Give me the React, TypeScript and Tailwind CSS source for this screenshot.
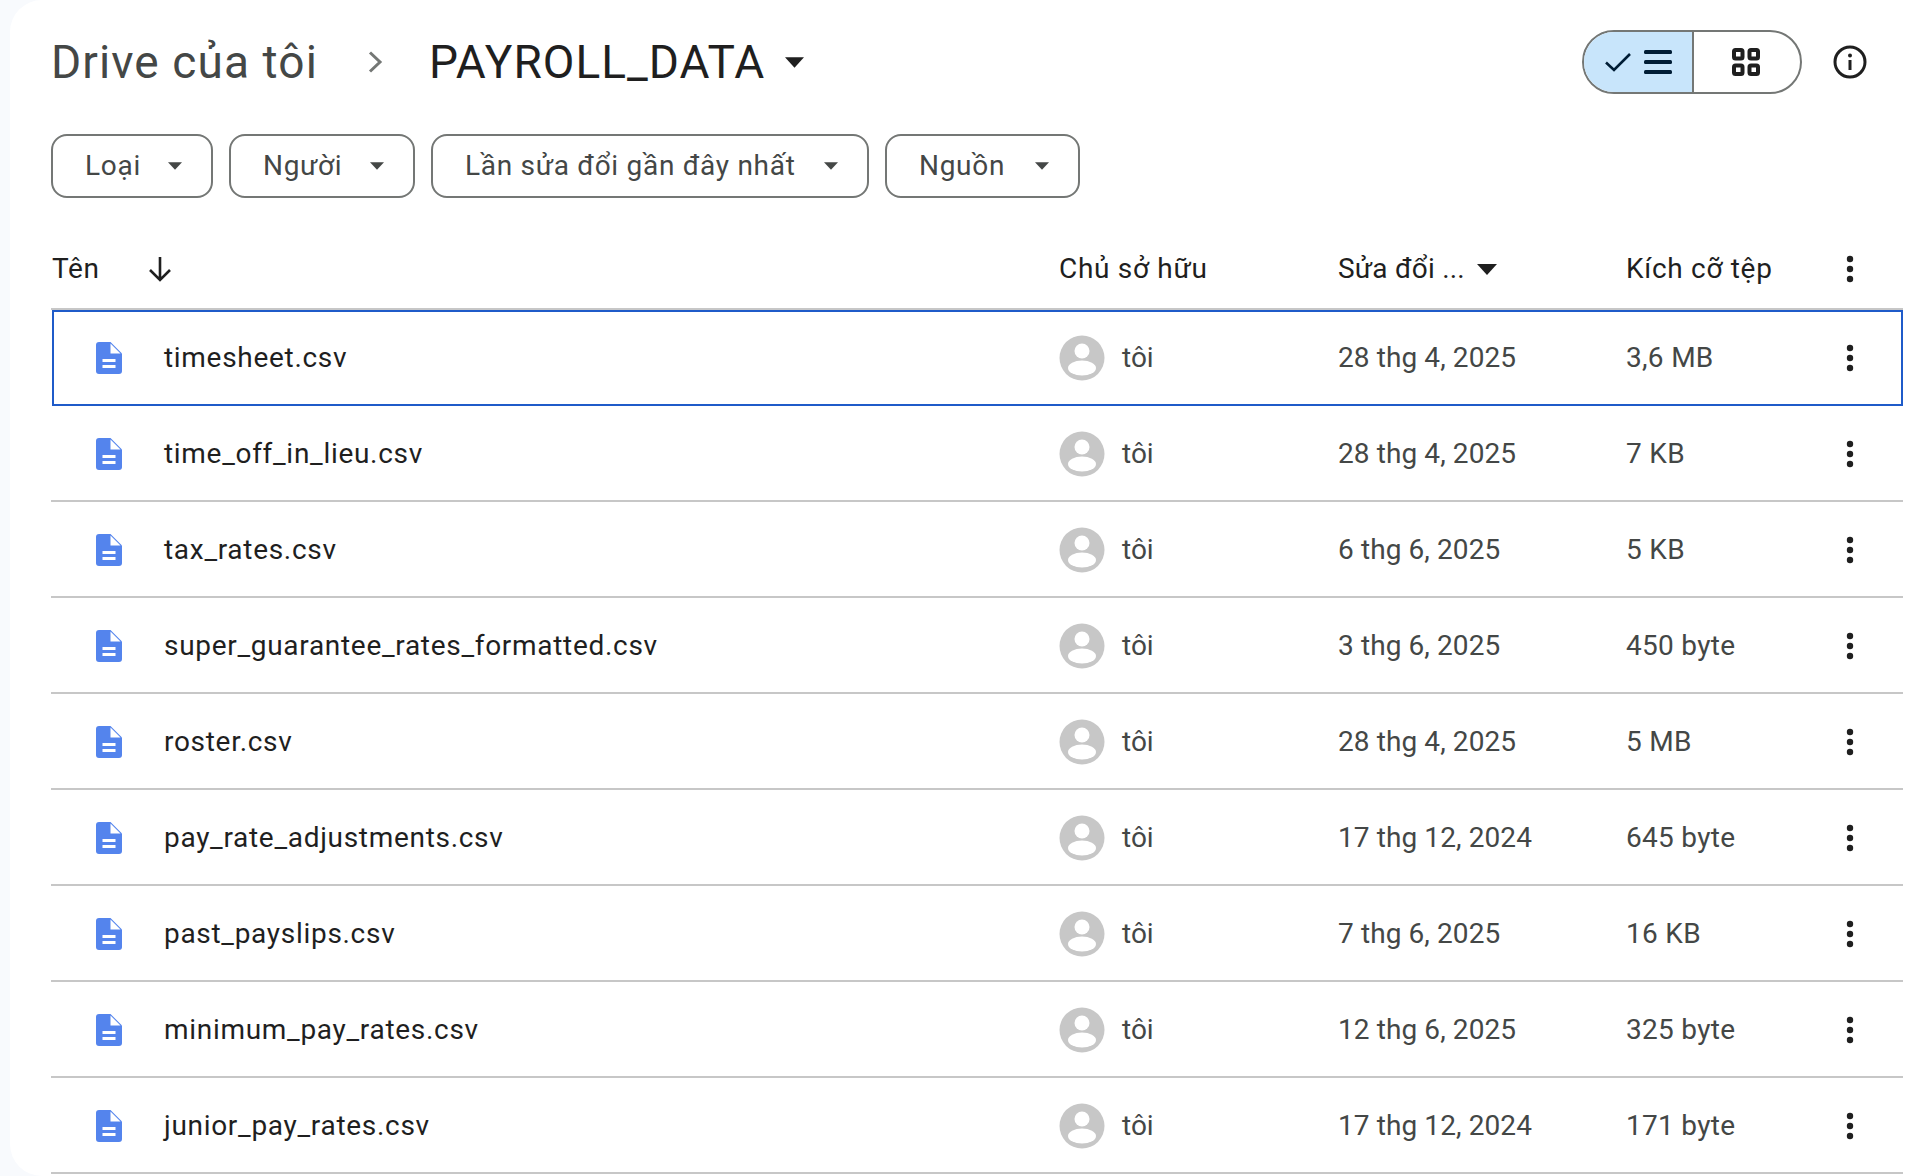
const files = [
  { name: 'timesheet.csv', date: '28 thg 4, 2025', size: '3,6 MB' },
  { name: 'time_off_in_lieu.csv', date: '28 thg 4, 2025', size: '7 KB' },
  { name: 'tax_rates.csv', date: '6 thg 6, 2025', size: '5 KB' },
  { name: 'super_guarantee_rates_formatted.csv', date: '3 thg 6, 2025', size: '450 byte' },
  { name: 'roster.csv', date: '28 thg 4, 2025', size: '5 MB' },
  { name: 'pay_rate_adjustments.csv', date: '17 thg 12, 2024', size: '645 byte' },
  { name: 'past_payslips.csv', date: '7 thg 6, 2025', size: '16 KB' },
  { name: 'minimum_pay_rates.csv', date: '12 thg 6, 2025', size: '325 byte' },
  { name: 'junior_pay_rates.csv', date: '17 thg 12, 2024', size: '171 byte' },
]

const filters = [
  { label: 'Loại', width: 'w-[162px]' },
  { label: 'Người', width: 'w-[186px]' },
  { label: 'Lần sửa đổi gần đây nhất', width: 'w-[438px]' },
  { label: 'Nguồn', width: 'w-[195px]' },
]

function Caret({ className }: { className: string }) {
  return (
    <svg viewBox="0 0 20 11" className={className} fill="currentColor">
      <path d="M0 0h20L10 11z" />
    </svg>
  )
}

function Dots() {
  return (
    <svg width="24" height="32" viewBox="0 0 24 32" className="text-[#1f1f1f]" fill="currentColor">
      <circle cx="12" cy="6" r="3.2" />
      <circle cx="12" cy="16" r="3.2" />
      <circle cx="12" cy="26" r="3.2" />
    </svg>
  )
}

function DocIcon() {
  return (
    <svg width="26" height="32" viewBox="0 0 26 32" className="shrink-0">
      <path
        d="M3 0h11.5L26 11.5V29a3 3 0 0 1-3 3H3a3 3 0 0 1-3-3V3a3 3 0 0 1 3-3z"
        fill="#5484ed"
      />
      <path d="M14.5 1.5 24.5 11.5H14.5z" fill="#fff" />
      <rect x="6.5" y="17" width="13" height="3" fill="#fff" />
      <rect x="6.5" y="23" width="13" height="3" fill="#fff" />
    </svg>
  )
}

function Avatar() {
  return (
    <svg width="46" height="46" viewBox="0 0 46 46" className="shrink-0">
      <circle cx="23" cy="23" r="22.5" fill="#c7c7c7" />
      <circle cx="23" cy="16" r="7.5" fill="#fff" />
      <ellipse cx="23" cy="33" rx="14" ry="7.5" fill="#fff" />
    </svg>
  )
}

function FileRow({ file, selected }: { file: (typeof files)[number]; selected: boolean }) {
  return (
    <div
      className={`grid h-[96px] items-center ${
        selected
          ? 'ml-[1px] grid-cols-[1005px_279px_288px_1fr] border-2 border-[#1f5bc9]'
          : 'grid-cols-[1008px_279px_288px_1fr] border-b-2 border-[#c7c7c7] pt-[2px]'
      }`}
    >
      <div className={`flex items-center text-[28px] tracking-[0.7px] text-[#1f1f1f] ${selected ? 'pl-[42px]' : 'pl-[45px]'}`}>
        <DocIcon />
        <span className="ml-[42px]">{file.name}</span>
      </div>
      <div className="flex items-center text-[28px] text-[#444746]">
        <Avatar />
        <span className="ml-[17px]">tôi</span>
      </div>
      <div className="text-[28px] tracking-[0.1px] text-[#444746]">{file.date}</div>
      <div className={`flex items-center justify-between text-[28px] tracking-[0.3px] text-[#444746] ${selected ? 'pr-[39px]' : 'pr-[41px]'}`}>
        <span>{file.size}</span>
        <Dots />
      </div>
    </div>
  )
}

export default function App() {
  return (
    <div className="flex h-[1176px] w-[1916px] overflow-hidden bg-[#f8fafd] font-['Roboto',sans-serif]">
      <div className="ml-[10px] flex h-full flex-1 flex-col rounded-l-[32px] bg-white pr-[13px] pl-[41px]">
        {/* Breadcrumb and view toggle */}
        <div className="flex h-[134px] shrink-0 items-start pt-[30px]">
          <div className="flex h-[64px] items-center">
            <span className="text-[46px] tracking-[1.1px] text-[#444746]">Drive của tôi</span>
            <svg width="15" height="22" viewBox="0 0 15 22" className="mr-[46px] ml-[50px] text-[#747775]" fill="none" stroke="currentColor" strokeWidth="3">
              <path d="M2 1.5 12 11 2 20.5" />
            </svg>
            <span className="text-[46px] tracking-[1px] text-[#1f1f1f]">PAYROLL_DATA</span>
            <Caret className="ml-[20px] h-[11px] w-[19px] text-[#1f1f1f]" />
          </div>
          <div className="ml-auto flex items-center">
            <div className="flex h-[64px] w-[220px] overflow-hidden rounded-full border-2 border-[#747775]">
              <div className="flex w-[110px] items-center gap-[13px] border-r-2 border-[#747775] bg-[#c8e5fb] pl-[21px] text-[#001d35]">
                <svg width="26" height="20" viewBox="0 0 26 20" fill="none" stroke="currentColor" strokeWidth="2.6">
                  <path d="M1 10.5 9 18 25 2" />
                </svg>
                <svg width="28" height="24" viewBox="0 0 28 24" fill="currentColor">
                  <rect y="0" width="28" height="4" rx="1.5" />
                  <rect y="10" width="28" height="4" rx="1.5" />
                  <rect y="20" width="28" height="4" rx="1.5" />
                </svg>
              </div>
              <div className="flex flex-1 items-center justify-center pr-[2px] text-[#1f1f1f]">
                <svg width="28" height="28" viewBox="0 0 28 28" fill="none" stroke="currentColor" strokeWidth="4">
                  <rect x="2" y="2" width="8.5" height="8.5" rx="1.5" />
                  <rect x="17.5" y="2" width="8.5" height="8.5" rx="1.5" />
                  <rect x="2" y="17.5" width="8.5" height="8.5" rx="1.5" />
                  <rect x="17.5" y="17.5" width="8.5" height="8.5" rx="1.5" />
                </svg>
              </div>
            </div>
            <svg width="34" height="34" viewBox="0 0 34 34" className="mr-[36px] ml-[31px] text-[#1f1f1f]" fill="none" stroke="currentColor" strokeWidth="3">
              <circle cx="17" cy="17" r="15" />
              <circle cx="17" cy="10.5" r="2" fill="currentColor" stroke="none" />
              <path d="M17 15v10" />
            </svg>
          </div>
        </div>

        {/* Filter chips */}
        <div className="flex shrink-0 gap-[16px]">
          {filters.map((filter) => (
            <button
              key={filter.label}
              className={`flex h-[64px] items-center justify-between rounded-[16px] border-2 border-[#747775] pr-[29px] pl-[32px] text-[28px] tracking-[0.7px] text-[#444746] ${filter.width}`}
            >
              <span>{filter.label}</span>
              <Caret className="h-[8px] w-[14px] text-[#444746]" />
            </button>
          ))}
        </div>

        {/* Column headers */}
        <div className="grid h-[112px] shrink-0 grid-cols-[1008px_279px_288px_1fr] items-center border-b-2 border-[#c7c7c7] pt-[32px] text-[28px] tracking-[0.7px] text-[#1f1f1f]">
          <div className="flex items-center pl-[1px]">
            <span>Tên</span>
            <svg width="24" height="26" viewBox="0 0 24 26" className="ml-[48px]" fill="none" stroke="currentColor" strokeWidth="2.6">
              <path d="M12 1v23M2 14l10 10 10-10" />
            </svg>
          </div>
          <div>Chủ sở hữu</div>
          <div className="flex items-center">
            <span className="tracking-[0.2px]">Sửa đổi ...</span>
            <Caret className="ml-[12px] h-[11px] w-[20px] text-[#1f1f1f]" />
          </div>
          <div className="flex items-center justify-between pr-[41px]">
            <span>Kích cỡ tệp</span>
            <Dots />
          </div>
        </div>

        {files.map((file, i) => (
          <FileRow key={file.name} file={file} selected={i === 0} />
        ))}
      </div>
    </div>
  )
}
